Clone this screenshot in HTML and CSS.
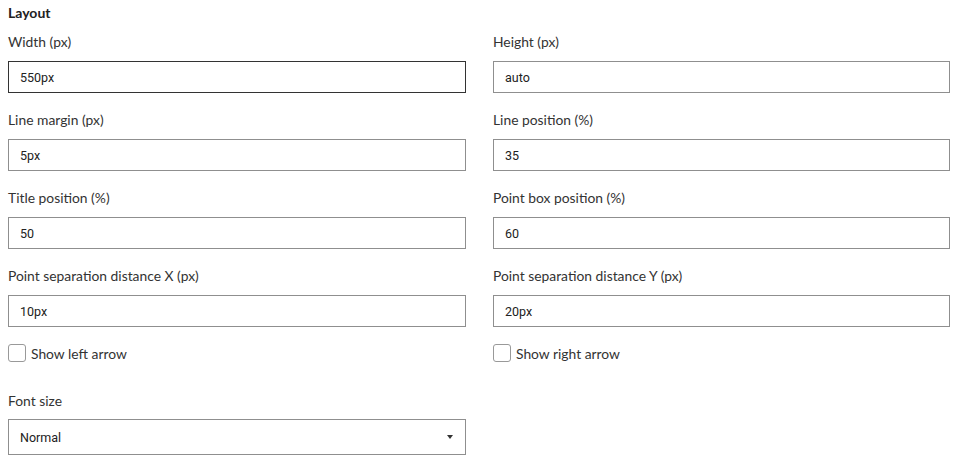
FILE: index.html
```html
<!DOCTYPE html>
<html>
<head>
<meta charset="utf-8">
<link rel="stylesheet" href="styles.css">
</head>
<body>
<div class="panel">
  <div class="title">Layout</div>
  <div class="grid">
    <div class="field">
      <label class="label">Width (px)</label>
      <div class="input focused">550px</div>
    </div>
    <div class="field">
      <label class="label">Height (px)</label>
      <div class="input">auto</div>
    </div>
    <div class="field">
      <label class="label">Line margin (px)</label>
      <div class="input">5px</div>
    </div>
    <div class="field">
      <label class="label">Line position (%)</label>
      <div class="input">35</div>
    </div>
    <div class="field">
      <label class="label">Title position (%)</label>
      <div class="input">50</div>
    </div>
    <div class="field">
      <label class="label">Point box position (%)</label>
      <div class="input">60</div>
    </div>
    <div class="field">
      <label class="label">Point separation distance X (px)</label>
      <div class="input">10px</div>
    </div>
    <div class="field">
      <label class="label">Point separation distance Y (px)</label>
      <div class="input">20px</div>
    </div>
    <div class="check"><span class="box"></span><span class="check-label">Show left arrow</span></div>
    <div class="check"><span class="box"></span><span class="check-label">Show right arrow</span></div>
    <div class="field select-field">
      <label class="label">Font size</label>
      <div class="select"><span>Normal</span><span class="caret"></span></div>
    </div>
  </div>
</div>
</body>
</html>
```
FILE: styles.css
```css
html, body {
  margin: 0;
  padding: 0;
  background: #fff;
}
body {
  font-family: Lato, "Liberation Sans", sans-serif;
  color: #333;
}
.panel {
  width: 942px;
  padding: 3px 0 0 8px;
}
.title {
  font-weight: bold;
  font-size: 14px;
  line-height: 20px;
  color: #222;
  margin-bottom: 9px;
}
.grid {
  display: grid;
  grid-template-columns: 458px 457px;
  column-gap: 27px;
}
.field {
  display: flex;
  flex-direction: column;
  margin-bottom: 17px;
}
.label {
  font-size: 13.85px;
  line-height: 20px;
  color: #333;
  margin-bottom: 9px;
}
.input {
  box-sizing: border-box;
  height: 32px;
  border: 1px solid #8f8f8f;
  padding: 0 11px;
  display: flex;
  align-items: center;
  font-family: Roboto, "Liberation Sans", sans-serif;
  font-size: 12.5px;
  color: #222;
}
.input.focused {
  border-color: #333;
}
.check {
  display: flex;
  align-items: center;
  height: 18px;
  margin-bottom: 29px;
}
.box {
  box-sizing: border-box;
  width: 18px;
  height: 18px;
  border: 1px solid #999;
  border-radius: 3px;
  margin-right: 5px;
  background: #fff;
}
.check-label {
  font-size: 13.85px;
  color: #333;
}
.select-field {
  margin-bottom: 0;
}
.select-field .label {
  margin-bottom: 8px;
}
.select {
  box-sizing: border-box;
  height: 36px;
  border: 1px solid #8f8f8f;
  padding: 0 11px;
  display: flex;
  align-items: center;
  justify-content: space-between;
  font-family: Roboto, "Liberation Sans", sans-serif;
  font-size: 12.5px;
  color: #222;
}
.caret {
  width: 0;
  height: 0;
  border-left: 3.5px solid transparent;
  border-right: 3.5px solid transparent;
  border-top: 4px solid #333;
  margin-right: 1px;
}
```
